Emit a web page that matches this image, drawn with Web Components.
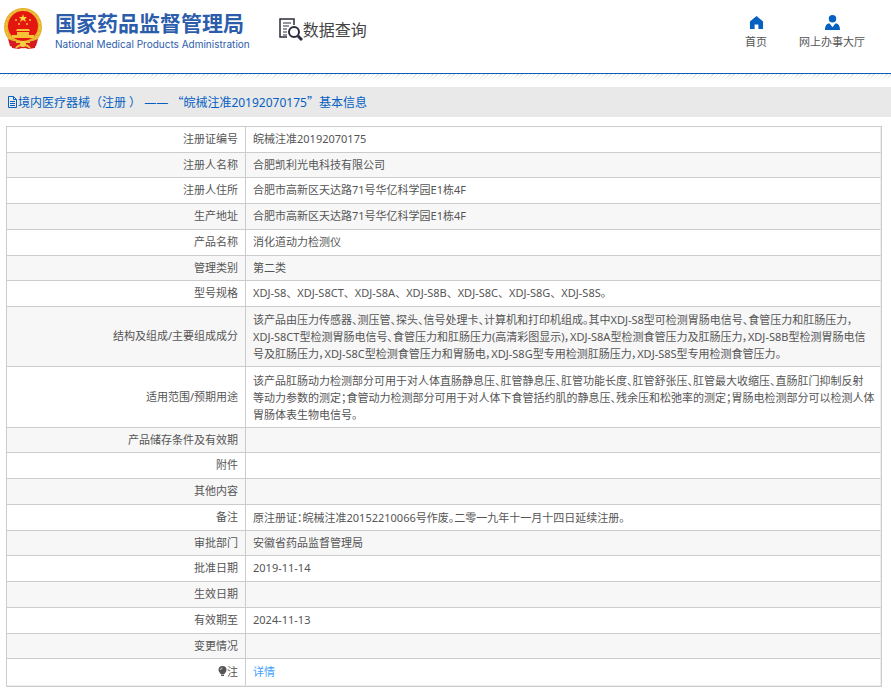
<!DOCTYPE html>
<html lang="zh-CN">
<head>
<meta charset="utf-8">
<title>数据查询</title>
<style>
  body {
    margin: 0;
    background: #fff;
    color: #555;
    font: 11px/17px "Noto Sans", "Noto Sans CJK SC", sans-serif;
  }

  .quote {
    font-family: "Noto Sans CJK SC", sans-serif;
  }
</style>
</head>
<body>
<nmpa-header>
  <nav-item icon="home" href="#home">首页</nav-item>
  <nav-item icon="user" href="#hall">网上办事大厅</nav-item>
</nmpa-header>
<main>
  <page-title>境内医疗器械（注册 ） —— <span class="quote">“</span>皖械注准20192070175<span class="quote">”</span>基本信息</page-title>
  <info-table></info-table>
</main>

<script>
const icons = {
  home: '<path d="M8 1 1 7v8h5v-5h4v5h5V7z"/>',
  user: '<circle cx="8" cy="4" r="4"/><path d="M0 16c0-5 2-7 5-7l3 4 3-4c3 0 5 2 5 7z"/>',
};

const headerTemplate = document.createElement('template');
headerTemplate.innerHTML = `
  <style>
    :host {
      display: block;
      border-bottom: 1px solid #0a5eb5;
    }

    header {
      display: flex;
      align-items: flex-start;
      height: 73px;
      box-sizing: border-box;
      padding: 8px 26px 0 4px;
    }

    .logo {
      display: flex;
      gap: 12px;
      color: #2b5dab;
    }

    .name {
      padding-top: 4px;
      font: bold 21px/21px "Noto Sans CJK SC", sans-serif;
    }

    .name-en {
      font: 10px/22px Inter, sans-serif;
    }

    .section {
      display: flex;
      align-items: center;
      margin: 9px 0 0 29px;
      color: #444;
      font: 16px/24px "Noto Sans CJK SC", sans-serif;
    }

    nav {
      display: flex;
      gap: 32px;
      margin: 7px 0 0 auto;
    }
  </style>

  <header>
    <div class="logo">
      <svg width="39" height="43" viewBox="0 0 39 43" aria-hidden="true">
        <path d="M7 29 8 40l7 1 4-2 5 2 7-1 1-11z" fill="#d71920"/>
        <circle cx="19" cy="19" r="19" fill="#e8b12c"/>
        <circle cx="19" cy="19" r="17" fill="none" stroke="#f5d24f" stroke-dasharray="3 2"/>
        <circle cx="19" cy="18" r="15" fill="#e3170f"/>
        <path d="m19 6 1 3h3l-2 2 1 3-3-2-3 2 1-3-2-2h3z" fill="#fbd63b"/>
        <g fill="#f6c336">
          <circle cx="12" cy="12" r="1"/><circle cx="26" cy="12" r="1"/>
          <circle cx="15" cy="16" r="1"/><circle cx="23" cy="16" r="1"/>
          <path d="M13 21h12l1 2H12zM13 24h12v3H13zM8 27h22v3H8z"/>
        </g>
        <path d="M4 31c7 4 23 4 30 0l-2 7c-7 3-19 3-26 0z" fill="#d71920"/>
        <path d="M12 34h14M12 40c3-4 11-4 14 0" fill="none" stroke="#efbd34" stroke-width="2"/>
        <circle cx="19" cy="36" r="3" fill="#f5cf49"/>
      </svg>
      <div>
        <div class="name">国家药品监督管理局</div>
        <div class="name-en">National Medical Products Administration</div>
      </div>
    </div>
    <div class="section">
      <svg width="24" height="24" viewBox="0 0 24 24" fill="none" stroke="#2c2c3c" aria-hidden="true">
        <path d="M8 20H1V2h14v6" stroke-width="1.5"/>
        <path d="M4 6h8M4 9h6M4 12h4M4 15h4M4 18h4"/>
        <circle cx="15" cy="15" r="5" stroke-width="2"/>
        <path d="m19 19 4 4" stroke-width="3"/>
      </svg>
      <span>数据查询</span>
    </div>
    <nav><slot></slot></nav>
  </header>
`;

class NmpaHeader extends HTMLElement {
  constructor() {
    super();
    this.attachShadow({ mode: 'open' }).append(headerTemplate.content.cloneNode(true));
  }
}

class NavItem extends HTMLElement {
  constructor() {
    super();
    this.attachShadow({ mode: 'open' });
  }

  connectedCallback() {
    this.shadowRoot.innerHTML = `
      <style>
        :host {
          display: block;
        }

        a {
          display: flex;
          flex-direction: column;
          align-items: center;
          gap: 3px;
          color: #555;
          text-decoration: none;
        }

        svg {
          fill: #0560c2;
        }
      </style>
      <a href="${this.getAttribute('href')}">
        <svg width="15" height="15" viewBox="0 0 16 16" aria-hidden="true">${icons[this.getAttribute('icon')]}</svg>
        <span><slot></slot></span>
      </a>
    `;
  }
}

const titleTemplate = document.createElement('template');
titleTemplate.innerHTML = `
  <style>
    :host {
      display: block;
    }

    .shade {
      height: 13px;
      background:
        linear-gradient(transparent, #fff 6px),
        repeating-linear-gradient(135deg, #ddd 0 1px, #fff 1px 3px);
    }

    h1 {
      display: flex;
      align-items: center;
      margin: 0;
      padding: 0 7px;
      height: 30px;
      background: #e9e9e9;
      color: #0560c2;
      font-size: 12px;
      font-weight: normal;
    }
  </style>

  <div class="shade"></div>
  <h1>
    <svg width="11" height="12" viewBox="0 0 11 12" fill="none" stroke="#0560c2" aria-hidden="true">
      <path d="M1.5.5h5l3 3v8h-8zM6.5.5v3h3M3 5.5h5M3 7.5h5M3 9.5h5"/>
    </svg>
    <span><slot></slot></span>
  </h1>
`;

class PageTitle extends HTMLElement {
  constructor() {
    super();
    this.attachShadow({ mode: 'open' }).append(titleTemplate.content.cloneNode(true));
  }
}

const bulb = `<svg width="9" height="10" viewBox="0 0 9 10" fill="#555" aria-hidden="true">
  <path d="M4.5 0a4 4 0 0 1 4 4c0 2-2 3-2 4h-4c0-1-2-2-2-4a4 4 0 0 1 4-4zM3 8.5h3V10H3z"/>
  <path d="M2.5 4q0-2 2-2" fill="none" stroke="#ccc"/>
</svg>`;

const rows = [
  ['注册证编号', '皖械注准20192070175'],
  ['注册人名称', '合肥凯利光电科技有限公司'],
  ['注册人住所', '合肥市高新区天达路71号华亿科学园E1栋4F'],
  ['生产地址', '合肥市高新区天达路71号华亿科学园E1栋4F'],
  ['产品名称', '消化道动力检测仪'],
  ['管理类别', '第二类'],
  ['型号规格', 'XDJ-S8、XDJ-S8CT、XDJ-S8A、XDJ-S8B、XDJ-S8C、XDJ-S8G、XDJ-S8S。'],
  ['结构及组成/主要组成成分', '该产品由压力传感器、测压管、探头、信号处理卡、计算机和打印机组成。其中XDJ-S8型可检测胃肠电信号、食管压力和肛肠压力，<br>XDJ-S8CT型检测胃肠电信号、食管压力和肛肠压力(高清彩图显示)，XDJ-S8A型检测食管压力及肛肠压力，XDJ-S8B型检测胃肠电信<br>号及肛肠压力，XDJ-S8C型检测食管压力和胃肠电，XDJ-S8G型专用检测肛肠压力，XDJ-S8S型专用检测食管压力。', 'tight'],
  ['适用范围/预期用途', '该产品肛肠动力检测部分可用于对人体直肠静息压、肛管静息压、肛管功能长度、肛管舒张压、肛管最大收缩压、直肠肛门抑制反射<br>等动力参数的测定；食管动力检测部分可用于对人体下食管括约肌的静息压、残余压和松弛率的测定；胃肠电检测部分可以检测人体<br>胃肠体表生物电信号。', 'tight'],
  ['产品储存条件及有效期', ''],
  ['附件', ''],
  ['其他内容', ''],
  ['备注', '原注册证：皖械注准20152210066号作废。二零一九年十一月十四日延续注册。', 'tight'],
  ['审批部门', '安徽省药品监督管理局'],
  ['批准日期', '2019-11-14'],
  ['生效日期', ''],
  ['有效期至', '2024-11-13'],
  ['变更情况', ''],
  [`${bulb}注`, '<a href="#detail">详情</a>'],
];

class InfoTable extends HTMLElement {
  constructor() {
    super();
    this.attachShadow({ mode: 'open' });
  }

  connectedCallback() {
    const body = rows
      .map(([label, value, type = '']) => `<tr><th scope="row">${label}</th><td class="${type}">${value}</td></tr>`)
      .join('');

    this.shadowRoot.innerHTML = `
      <style>
        :host {
          display: block;
          margin: 9px 9px 8px 6px;
        }

        table {
          width: 100%;
          border: 1px solid #ccc;
          border-collapse: separate;
          border-spacing: 0;
        }

        th,
        td {
          box-sizing: border-box;
          padding: 3px 0 5px 7px;
          border-bottom: 1px solid #ccc;
          line-height: 17px;
          vertical-align: middle;
        }

        th {
          width: 239px;
          padding-right: 7px;
          border-right: 1px solid #ccc;
          font-weight: normal;
          text-align: right;
        }

        td {
          border-right: 1px solid #eee;
        }

        tr {
          height: 26px;
        }

        tr:nth-child(even) {
          background: #f7f7f7;
        }

        tr:nth-child(4n + 2) {
          height: 25px;
        }

        tr:nth-child(4n + 2) > * {
          padding-bottom: 4px;
        }

        tr:nth-child(9) {
          height: 61px;
        }

        tr:last-child {
          height: 27px;
        }

        tr:last-child > * {
          padding-bottom: 4px;
          border-bottom-color: #eee;
        }

        .tight {
          padding-top: 4px;
          padding-bottom: 4px;
          font-feature-settings: "palt"; /* proportional punctuation */
        }

        a {
          color: #409eff;
          text-decoration: none;
        }
      </style>
      <table><tbody>${body}</tbody></table>
    `;
  }
}

customElements.define('nmpa-header', NmpaHeader);
customElements.define('nav-item', NavItem);
customElements.define('page-title', PageTitle);
customElements.define('info-table', InfoTable);
</script>
</body>
</html>
